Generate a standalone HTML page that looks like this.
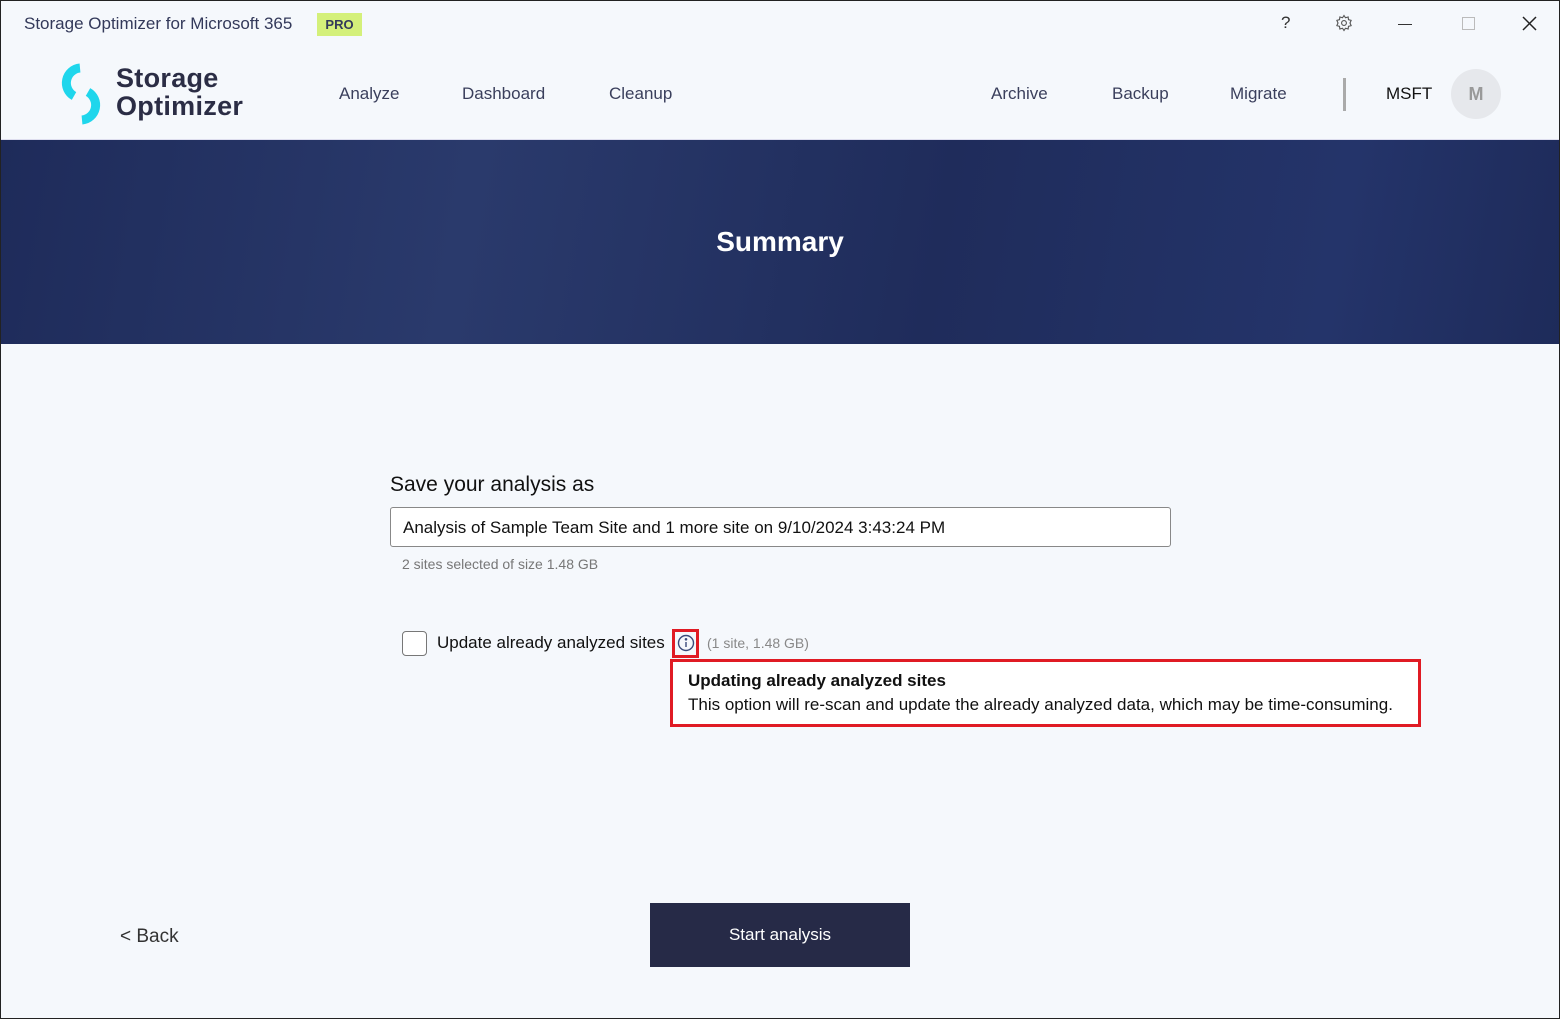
<!DOCTYPE html>
<html><head><meta charset="utf-8"><style>
*{box-sizing:border-box;margin:0;padding:0}
body{width:1560px;height:1019px;overflow:hidden;background:#f5f8fc;font-family:"Liberation Sans",sans-serif;position:relative}
.a{position:absolute;white-space:nowrap}
.nav{font-size:17px;color:#3a3f5c;top:84px}
</style></head><body>
<div class="a" style="left:0;top:0;width:1560px;height:1019px;border:1px solid #222;z-index:5"></div>
<div class="a" style="left:24px;top:14px;font-size:17px;color:#33395a">Storage Optimizer for Microsoft 365</div>
<div class="a" style="left:317px;top:13px;width:45px;height:23px;background:#d4f07a;color:#333a5a;font-weight:bold;font-size:13px;text-align:center;line-height:23px">PRO</div>
<div class="a" style="left:1281px;top:13px;font-size:17px;color:#333">?</div>
<svg class="a" style="left:1335px;top:14px" width="18" height="18" viewBox="0 0 24 24" fill="none" stroke="#555" stroke-width="1.5"><circle cx="12" cy="12" r="3.2"/><path d="M12 2l2 3 3.5-1 .5 3.5 3.5 1-1.5 3.5 1.5 3.5-3.5 1-.5 3.5-3.5-1-2 3-2-3-3.5 1-.5-3.5-3.5-1L4 12 2.5 8.5 6 7.5 6.5 4 10 5z"/></svg>
<div class="a" style="left:1398px;top:24px;width:14px;height:1px;background:#333"></div>
<div class="a" style="left:1462px;top:17px;width:13px;height:13px;border:1px solid #bbb"></div>
<svg class="a" style="left:1522px;top:16px" width="15" height="15" viewBox="0 0 15 15" stroke="#222" stroke-width="1.5"><path d="M1 1L14 14M14 1L1 14"/></svg>
<svg class="a" style="left:57px;top:63px" width="48" height="62" viewBox="0 0 48 62" fill="none" stroke="#1fd6ec" stroke-width="9"><path d="M23 5 A15 15 0 0 0 17 33"/><path d="M25 57 A15 15 0 0 0 31 29"/></svg>
<div class="a" style="left:116px;top:64px;font-size:27px;font-weight:bold;color:#2b2d45;line-height:28px;letter-spacing:0.3px">Storage<br>Optimizer</div>
<div class="a nav" style="left:339px">Analyze</div>
<div class="a nav" style="left:462px">Dashboard</div>
<div class="a nav" style="left:609px">Cleanup</div>
<div class="a nav" style="left:991px">Archive</div>
<div class="a nav" style="left:1112px">Backup</div>
<div class="a nav" style="left:1230px">Migrate</div>
<div class="a" style="left:1343px;top:78px;width:3px;height:33px;background:#aaa"></div>
<div class="a" style="left:1386px;top:84px;font-size:17px;color:#111">MSFT</div>
<div class="a" style="left:1451px;top:69px;width:50px;height:50px;border-radius:50%;background:#e6e8ec;color:#999;font-weight:bold;font-size:18px;text-align:center;line-height:50px">M</div>
<div class="a" style="left:0;top:139px;width:1560px;height:1px;background:#dde"></div>
<div class="a" style="left:0;top:140px;width:1560px;height:204px;background:linear-gradient(100deg,#1e2b5a,#2a3a6c 30%,#1f2c5b 60%,#24346a 85%,#1e2b5a)"></div>
<div class="a" style="left:0;top:226px;width:1560px;text-align:center;font-size:28px;font-weight:bold;color:#fff">Summary</div>
<div class="a" style="left:390px;top:473px;font-size:21px;color:#111">Save your analysis as</div>
<div class="a" style="left:390px;top:507px;width:781px;height:40px;border:1px solid #888;border-radius:3px;background:#fff;padding:10px 12px;font-size:17px;color:#111">Analysis of Sample Team Site and 1 more site on 9/10/2024 3:43:24 PM</div>
<div class="a" style="left:402px;top:556px;font-size:14px;color:#777">2 sites selected of size 1.48 GB</div>
<div class="a" style="left:402px;top:631px;width:25px;height:25px;border:1.5px solid #777;border-radius:4px;background:#fff"></div>
<div class="a" style="left:437px;top:633px;font-size:17px;color:#111">Update already analyzed sites</div>
<div class="a" style="left:672px;top:629px;width:27px;height:29px;border:3px solid #e01b24"></div>
<svg class="a" style="left:677px;top:634px" width="18" height="18" viewBox="0 0 18 18" fill="none" stroke="#3a4a7a" stroke-width="1.4"><circle cx="9" cy="9" r="7.5"/><path d="M9 8v5"/><circle cx="9" cy="5.3" r=".6" fill="#3a4a7a"/></svg>
<div class="a" style="left:707px;top:635px;font-size:14px;color:#888">(1 site, 1.48 GB)</div>
<div class="a" style="left:670px;top:659px;width:751px;height:68px;border:3px solid #e01b24;background:#fff;padding:7px 15px;font-size:17px;color:#111;line-height:24px"><b>Updating already analyzed sites</b><br>This option will re-scan and update the already analyzed data, which may be time-consuming.</div>
<div class="a" style="left:120px;top:926px;font-size:19px;color:#333">&lt; Back</div>
<div class="a" style="left:650px;top:903px;width:260px;height:64px;background:#262a47;color:#fff;font-size:17px;text-align:center;line-height:64px">Start analysis</div>
</body></html>
